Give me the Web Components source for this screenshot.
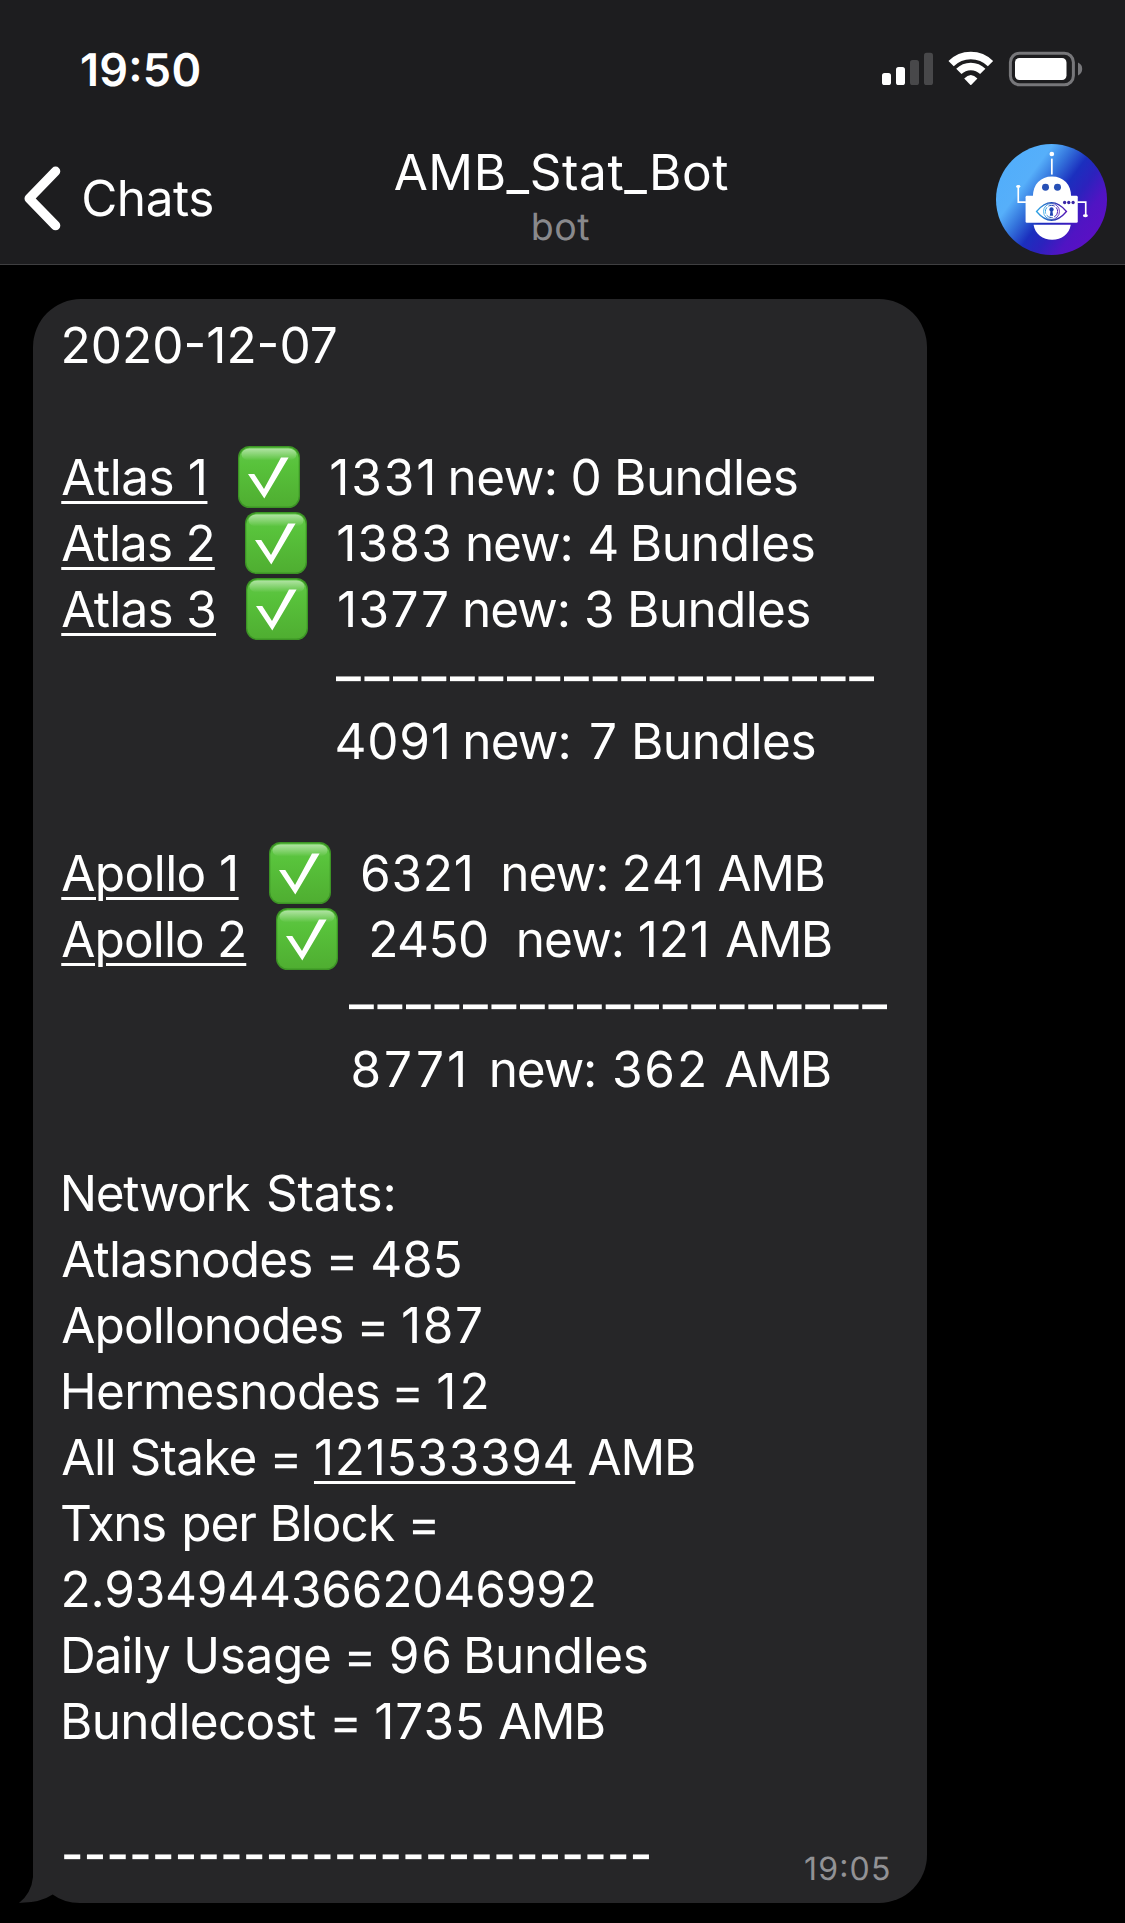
<!DOCTYPE html>
<html lang="en">
<head>
<meta charset="utf-8">
<title>AMB_Stat_Bot</title>
<style>
  html, body { margin: 0; background: #000; }
  body { font-family: Inter, "Liberation Sans", sans-serif; color: #fff; text-rendering: geometricPrecision; }
</style>
</head>
<body>
<chat-screen>
  <chat-header slot="header">
    <status-bar slot="status"><fit-text ink="117.3">19:50</fit-text></status-bar>
    <back-button slot="back"><fit-text ink="128.7">Chats</fit-text></back-button>
    <fit-text slot="title" ink="333.2">AMB_Stat_Bot</fit-text>
    <fit-text slot="subtitle" ink="56">bot</fit-text>
    <bot-avatar slot="avatar"></bot-avatar>
  </chat-header>

  <message-bubble>
    <message-line><fit-text gap="3.5" ink="272.5">2020-12-07</fit-text></message-line>
    <message-line></message-line>
    <message-line><fit-text link gap="2" ink="142">Atlas 1</fit-text> <check-mark gap="34"></check-mark> <fit-text gap="31.5" ink="101">1331</fit-text> <fit-text gap="18" ink="104">new:</fit-text> <fit-text gap="18.2" ink="26.6">0</fit-text> <fit-text gap="18.7" ink="178.7">Bundles</fit-text></message-line>
    <message-line><fit-text link gap="2" ink="150.5">Atlas 2</fit-text> <check-mark gap="32.5"></check-mark> <fit-text gap="31.5" ink="110.5">1383</fit-text> <fit-text gap="19" ink="102.3">new:</fit-text> <fit-text gap="19" ink="27.7">4</fit-text> <fit-text gap="16.7" ink="180">Bundles</fit-text></message-line>
    <message-line><fit-text link gap="2" ink="152">Atlas 3</fit-text> <check-mark gap="32"></check-mark> <fit-text gap="31.3" ink="108">1377</fit-text> <fit-text gap="17.7" ink="102.5">new:</fit-text> <fit-text gap="18.2" ink="26.6">3</fit-text> <fit-text gap="18.7" ink="178.3">Bundles</fit-text></message-line>
    <message-line rule><fit-text gap="276" ink="538">–––––––––––––––––––</fit-text></message-line>
    <message-line><fit-text gap="276.7" ink="110.3">4091</fit-text> <fit-text gap="18.3" ink="103">new:</fit-text> <fit-text gap="22.8" ink="24.5">7</fit-text> <fit-text gap="19.2" ink="179.6">Bundles</fit-text></message-line>
    <message-line></message-line>
    <message-line><fit-text link gap="2" ink="173.3">Apollo 1</fit-text> <check-mark gap="33.7"></check-mark> <fit-text gap="31.3" ink="107.7">6321</fit-text> <fit-text gap="33.3" ink="102.7">new:</fit-text> <fit-text gap="18.5" ink="75.5">241</fit-text> <fit-text gap="18.4" ink="105.3">AMB</fit-text></message-line>
    <message-line><fit-text link gap="2" ink="182">Apollo 2</fit-text> <check-mark gap="32"></check-mark> <fit-text gap="33.3" ink="115.4">2450</fit-text> <fit-text gap="32.1" ink="102.8">new:</fit-text> <fit-text gap="18.4" ink="66">121</fit-text> <fit-text gap="20" ink="105">AMB</fit-text></message-line>
    <message-line rule tight><fit-text gap="289" ink="538">–––––––––––––––––––</fit-text></message-line>
    <message-line><fit-text gap="292.7" ink="110.6">8771</fit-text> <fit-text gap="28.5" ink="102.1">new:</fit-text> <fit-text gap="20.4" ink="89.7">362</fit-text> <fit-text gap="21" ink="105">AMB</fit-text></message-line>
    <message-line short></message-line>
    <message-line><fit-text gap="3.7" ink="187">Network</fit-text> <fit-text gap="17.6" ink="125">Stats:</fit-text></message-line>
    <message-line><fit-text gap="2" ink="249.3">Atlasnodes</fit-text> <fit-text gap="17.7" ink="26.3">=</fit-text> <fit-text gap="17.4" ink="87.6">485</fit-text></message-line>
    <message-line><fit-text gap="2" ink="280.3">Apollonodes</fit-text> <fit-text gap="17.7" ink="26.3">=</fit-text> <fit-text gap="17" ink="78">187</fit-text></message-line>
    <message-line><fit-text gap="3.7" ink="315">Hermesnodes</fit-text> <fit-text gap="16" ink="26.6">=</fit-text> <fit-text gap="17.4" ink="48">12</fit-text></message-line>
    <message-line><fit-text gap="2" ink="51.3">All</fit-text> <fit-text gap="18.4" ink="124">Stake</fit-text> <fit-text gap="17.3" ink="26.3">=</fit-text> <fit-text link gap="17" ink="255.7">121533394</fit-text> <fit-text gap="16.3" ink="106">AMB</fit-text></message-line>
    <message-line><fit-text gap="2.3" ink="102.7">Txns</fit-text> <fit-text gap="19.3" ink="71.7">per</fit-text> <fit-text gap="17.3" ink="121.7">Block</fit-text> <fit-text gap="16" ink="26.3">=</fit-text></message-line>
    <message-line><fit-text gap="3.5" ink="530.2">2.9349443662046992</fit-text></message-line>
    <message-line><fit-text gap="3.8" ink="106.2">Daily</fit-text> <fit-text gap="17" ink="143">Usage</fit-text> <fit-text gap="17" ink="26.3">=</fit-text> <fit-text gap="17.7" ink="58">96</fit-text> <fit-text gap="18" ink="179.7">Bundles</fit-text></message-line>
    <message-line><fit-text gap="3.8" ink="251.6">Bundlecost</fit-text> <fit-text gap="17.3" ink="26.6">=</fit-text> <fit-text gap="17.4" ink="106">1735</fit-text> <fit-text gap="16.3" ink="105">AMB</fit-text></message-line>
    <message-line></message-line>
    <message-line rule slot="last"><fit-text gap="3.8" ink="585.7">--------------------------</fit-text></message-line>
    <fit-text slot="time" ink="83.6">19:05</fit-text>
  </message-bubble>
</chat-screen>

<script>
const define = (name, html, ready) => customElements.define(name, class extends HTMLElement {
  connectedCallback() {
    if (this.shadowRoot) return;
    this.attachShadow({ mode: 'open' }).innerHTML = html;
    if (ready) ready(this);
  }
});

define('chat-screen', `
  <style>
    :host { display: flex; flex-direction: column; width: 1125px; height: 1923px; overflow: hidden; background: #000; }
    main { padding: 34px 0 0 33px; }
  </style>
  <slot name="header"></slot>
  <main><slot></slot></main>`);

define('chat-header', `
  <style>
    :host { display: flex; flex-direction: column; box-sizing: border-box; height: 265px; background: #1d1d1f; border-bottom: 1px solid #3f3f41; }
    nav { display: grid; grid-template-columns: 1fr auto 1fr; height: 126px; padding: 0 18px 0 15px; }
    .names { display: flex; flex-direction: column; align-items: center; padding-top: 4px; }
    .title { font-size: 49.5px; line-height: 60px; }
    .sub { font-size: 37.5px; line-height: 46px; color: #89898c; margin-top: 3px; }
    .left { padding: 6px 0 0 9px; }
    .right { display: flex; justify-content: flex-end; padding-top: 6px; }
  </style>
  <slot name="status"></slot>
  <nav>
    <div class="left"><slot name="back"></slot></div>
    <div class="names"><div class="title"><slot name="title"></slot></div><div class="sub"><slot name="subtitle"></slot></div></div>
    <div class="right"><slot name="avatar"></slot></div>
  </nav>`);

define('status-bar', `
  <style>
    :host { display: flex; justify-content: space-between; align-items: flex-start; height: 138px; box-sizing: border-box; padding: 41px 42px 0 81.5px; font-size: 45px; line-height: 56px; font-weight: 600; }
    div { padding-top: 1px; }
    svg { display: block; margin-top: 10px; }
  </style>
  <div><slot></slot></div>
  <svg width="201" height="36" viewBox="882 51 201 36">
    <g fill="#fff"><rect x="882" y="73" width="9" height="12" rx="2.6"/><rect x="896" y="67" width="9" height="18" rx="2.6"/></g>
    <g fill="#48484a"><rect x="910" y="60" width="9" height="25" rx="2.6"/><rect x="924" y="52.8" width="9" height="32.2" rx="2.6"/></g>
    <g fill="none" stroke="#fff" stroke-width="7.5">
      <path d="M951.1 63.7A27.9 27.9 0 0 1 990.5 63.7"/>
      <path d="M958.85 71.45A16.9 16.9 0 0 1 982.75 71.45"/>
    </g>
    <path d="M964.2 78.6Q970.8 71.6 977.4 78.6L971.4 84.8Q970.8 85.3 970.2 84.8Z" fill="#fff"/>
    <rect x="1010.4" y="53.2" width="63" height="31.6" rx="9" fill="none" stroke="#77777a" stroke-width="3"/>
    <rect x="1015" y="58" width="51.5" height="22" rx="4.5" fill="#fff"/>
    <path d="M1078 62.6Q1082.2 64.6 1082.2 69T1078 75.4Z" fill="#77777a"/>
  </svg>`);

define('back-button', `
  <style>
    :host { display: flex; align-items: flex-start; font-size: 49.5px; line-height: 60px; }
    svg { display: block; margin: 22px 22.500px 0 0; }
    div { padding-top: 24px; }
  </style>
  <svg width="37" height="65" viewBox="24 166 37 65"><path d="M55.6 171.3L29.2 198.5L55.6 225.6" fill="none" stroke="#fff" stroke-width="9.4" stroke-linecap="round" stroke-linejoin="round"/></svg>
  <div><slot></slot></div>`);

define('bot-avatar', `
  <style>:host { display: block; width: 111px; height: 111px; } svg { display: block; }</style>
  <svg width="111" height="111" viewBox="0 0 334 334">
    <defs>
      <linearGradient id="sky" x1=".08" y1=".2" x2=".9" y2=".8">
        <stop offset="0" stop-color="#52aefb"/><stop offset=".23" stop-color="#56affa"/>
        <stop offset=".38" stop-color="#3474dc"/><stop offset=".54" stop-color="#1b2fbe"/>
        <stop offset=".68" stop-color="#2c22bd"/><stop offset=".84" stop-color="#5014c3"/><stop offset="1" stop-color="#5a10c4"/>
      </linearGradient>
      <linearGradient id="iris" x1="0" x2="1"><stop offset="0" stop-color="#2ea6e6"/><stop offset=".5" stop-color="#2048b4"/><stop offset="1" stop-color="#5516b8"/></linearGradient>
    </defs>
    <circle cx="167" cy="167" r="167" fill="url(#sky)"/>
    <g fill="#fff">
      <circle cx="168" cy="30" r="7"/><rect x="165.4" y="44" width="5.2" height="48"/>
      <path d="M111 158C111 122 134 98 168.500 98S226 122 226 158Z"/>
      <rect x="89" y="156" width="157" height="81" rx="4"/>
      <path d="M113 243H225C221 271 197 288 169 288S117 271 113 243Z"/>
      <ellipse cx="67" cy="128" rx="6.500" ry="4.500"/><ellipse cx="269" cy="216" rx="7.500" ry="4.500"/>
    </g>
    <path d="M67 130V175H90M245 175H270V215" fill="none" stroke="#fff" stroke-width="5"/>
    <g fill="#2750b6"><circle cx="149" cy="130" r="10.500"/><circle cx="185" cy="130" r="10.500"/></g>
    <g fill="#3a26a6"><circle cx="206.500" cy="176" r="5"/><circle cx="219" cy="176" r="5"/><circle cx="232" cy="176" r="5"/></g>
    <g fill="none" stroke="url(#iris)">
      <path d="M122 203Q167 150 212 203Q167 256 122 203Z" stroke-width="4"/>
      <circle cx="167" cy="203" r="24" stroke-width="2.500"/>
      <circle cx="167" cy="203" r="18.500" stroke-width="3" stroke-dasharray="20 5"/>
    </g>
    <circle cx="167" cy="197" r="6.500" fill="#2144b2"/><path d="M164.500 199H169.500L172 216H162Z" fill="#2144b2"/>
  </svg>`);

define('message-bubble', `
  <style>
    :host { display: flex; flex-direction: column; position: relative; box-sizing: border-box; width: 894px; height: 1604px; padding: 13px 38px 0 27px; background: #262628; border-radius: 48px 48px 48px 0; font-size: 49.5px; line-height: 66px; }
    .last { display: flex; justify-content: space-between; align-items: flex-end; }
    .time { font-size: 32px; line-height: 40px; color: #929295; margin-bottom: -3px; }
    svg { position: absolute; left: -15px; bottom: 0; }
  </style>
  <slot></slot>
  <div class="last"><slot name="last"></slot><div class="time"><slot name="time"></slot></div></div>
  <svg width="64" height="26" viewBox="18 1877 64 26">
    <path d="M18 1877H33V1903H18Z" fill="#000"/>
    <path d="M34 1877H33Q31.500 1893 19 1903Q40 1903 52.700 1895H34Z" fill="#262628"/>
    <path d="M19 1903Q40 1903 52.700 1894.500Q64 1903 80 1903Z" fill="#000"/>
  </svg>`);

define('message-line', `
  <style>
    :host { display: block; box-sizing: border-box; height: 66px; white-space: nowrap; }
    :host([rule]) { padding-top: 1px; font-weight: 500; }
    :host([tight]) { margin-top: -2px; }
    :host([short]) { height: 58px; }
  </style>
  <slot></slot>`);

/* Metrics are read at ten times the size, so that they are not rounded to whole pixels. */
const pen = document.createElement('canvas').getContext('2d');
function measure(el, text) {
  const cs = getComputedStyle(el);
  pen.font = `${cs.fontWeight} ${parseFloat(cs.fontSize) * 10}px ${cs.fontFamily}`;
  const m = pen.measureText(text);
  return { advance: m.width / 10, left: m.actualBoundingBoxLeft / 10, right: m.actualBoundingBoxRight / 10 };
}

/* Distance to the previous item, less the word space that already separates them. */
function setGap(el) {
  const gap = parseFloat(el.getAttribute('gap')) || 0;
  const space = el.previousElementSibling && el.parentElement.localName === 'message-line' ? measure(el, ' ').advance : 0;
  el.style.marginLeft = (gap - space).toFixed(2) + 'px';
}

define('check-mark', `
  <style>:host { display: inline-block; width: 62px; height: 62px; vertical-align: -13px; line-height: 0; } svg { display: block; }</style>
  <svg width="62" height="62" viewBox="0 0 62 62">
    <defs>
      <linearGradient id="face" x1="0" y1="0" x2="0" y2="1"><stop offset="0" stop-color="#62c848"/><stop offset=".3" stop-color="#58c23b"/><stop offset="1" stop-color="#4fae31"/></linearGradient>
      <linearGradient id="shine" x1="0" y1="0" x2="0" y2="1"><stop offset="0" stop-color="#fff" stop-opacity=".5"/><stop offset="1" stop-color="#fff" stop-opacity="0"/></linearGradient>
    </defs>
    <rect width="62" height="62" rx="11.500" fill="#3c9425"/>
    <rect x="1.300" y="1.600" width="59.400" height="59" rx="10.500" fill="url(#face)"/>
    <rect x="3.500" y="2.400" width="55" height="12" rx="8" fill="url(#shine)"/>
    <path d="M10 28H16.300L26 43L43 11.500H50.600L26.300 52.600Z" fill="#fff"/>
  </svg>`, setGap);

/* Text whose tracking is adjusted so that its drawn width equals the "ink" attribute. */
define('fit-text', `
  <style>
    :host { display: inline-block; white-space: nowrap; }
    span { display: inline-block; font-feature-settings: "calt"; }
    :host([link]) span { text-decoration: underline; text-decoration-thickness: 3px; text-underline-offset: 6px; }
  </style>
  <span><slot></slot></span>`, el => {
  const text = el.textContent, ink = parseFloat(el.getAttribute('ink'));
  setGap(el);
  const m = measure(el, text), natural = m.left + m.right;
  const span = el.shadowRoot.querySelector('span');
  let shift = m.left;
  if (text.length > 1) span.style.letterSpacing = ((ink - natural) / (text.length - 1)).toFixed(3) + 'px';
  else shift += (ink - natural) / 2;
  span.style.marginLeft = shift.toFixed(2) + 'px';
  el.style.width = ink + 'px';
});
</script>
</body>
</html>
